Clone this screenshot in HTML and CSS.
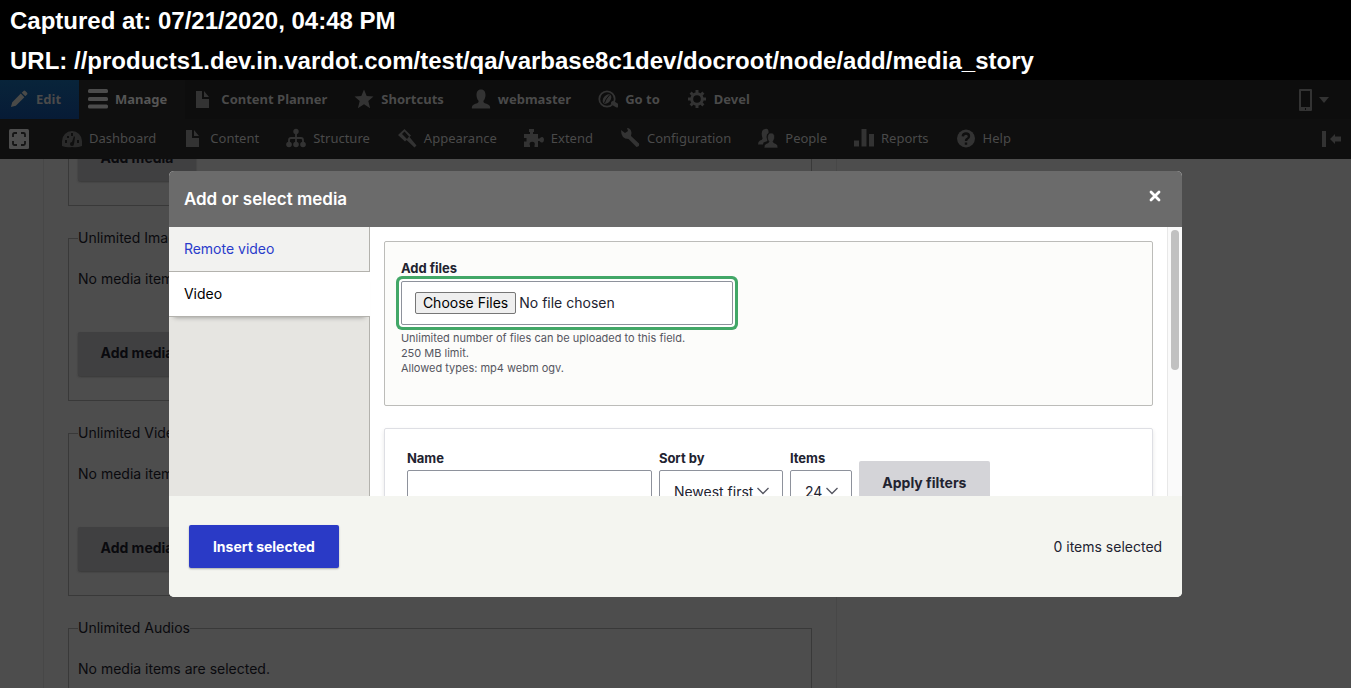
FILE: index.html
```html
<!DOCTYPE html>
<html lang="en">
<head>
<meta charset="utf-8">
<title>Create Media Story</title>
<link rel="stylesheet" href="styles.css">
</head>
<body>
<header class="capture">
  <p>Captured at: 07/21/2020, 04:48 PM</p>
  <p>URL: //products1.dev.in.vardot.com/test/qa/varbase8c1dev/docroot/node/add/media_story</p>
</header>
<div class="app">
  <nav class="toolbar" aria-label="Administration">
    <div class="bar bar-main">
      <a class="item edit" href="#"><svg viewBox="0 0 20 20"><path d="M1 19l1.500-5.500L12 4l4 4-9.500 9.500zM13 3l2-2q1-.8 2 0l2 2q.8 1 0 2l-2 2z"/></svg>Edit</a>
      <a class="item active" href="#"><svg viewBox="0 0 20 20"><rect y="0" width="20" height="4" rx="1.500"/><rect y="8" width="20" height="4" rx="1.500"/><rect y="15.500" width="20" height="4" rx="1.500"/></svg>Manage</a>
      <a class="item" href="#"><svg viewBox="0 0 20 20"><path d="M2 2h6v8h7v9H2zM10 2l5 6h-5z"/></svg>Content Planner</a>
      <a class="item" href="#"><svg viewBox="0 0 20 20"><path d="M10 .5l2.700 6.500 6.800.4-5.200 4.600 1.800 7.200-6.100-4-6.100 4L5.700 12 .5 7.400 7.300 7z"/></svg>Shortcuts</a>
      <a class="item" href="#"><svg viewBox="0 0 20 20"><path d="M10 .5c3.500 0 4.500 2.500 4.500 5.500 0 2.500-.8 4.500-2 5.700-.6 2.600 2.500 2.500 5 4 1.500 1 1.700 2 1.700 3.800H.8c0-1.800.2-2.800 1.700-3.800 2.500-1.500 5.600-1.400 5-4-1.200-1.200-2-3.200-2-5.700C5.500 3 6.500.5 10 .5z"/></svg>webmaster</a>
      <a class="item" href="#"><svg viewBox="0 0 20 20"><circle cx="9" cy="10" r="7.700" fill="none" stroke="currentColor" stroke-width="1.800"/><ellipse cx="9" cy="10" rx="3.500" ry="5.500" transform="rotate(38 9 10)"/><path d="M6.500 14q1-4 5-8" stroke="#0d0d0d" fill="none"/><path d="M15 14l4 2.500" stroke="currentColor" stroke-width="4" stroke-linecap="round"/></svg>Go to</a>
      <a class="item" href="#"><svg viewBox="0 0 20 20"><circle cx="10" cy="10" r="5.300" fill="none" stroke="currentColor" stroke-width="3"/><path d="M10 1v3M10 16v3M1 10h3M16 10h3M3.600 3.600l2.200 2.200M14.200 14.200l2.200 2.200M3.600 16.400l2.200-2.200M14.200 5.800l2.200-2.200" stroke="currentColor" stroke-width="3"/></svg>Devel</a>
      <button class="device" type="button" aria-label="Preview on device"><svg viewBox="0 0 30 22"><path fill-rule="evenodd" d="M1 0h11q1 0 1 1v20q0 1-1 1H1q-1 0-1-1V1q0-1 1-1zm1 2v16h9V2zM6 19v2h1v-2z"/><path d="M20 8h10l-5 6z"/></svg></button>
    </div>
    <div class="bar bar-tray">
      <a class="home" href="#" aria-label="Home"><svg viewBox="0 0 20 20"><rect width="20" height="20" rx="1.500"/><g fill="none" stroke="#151515" stroke-width="1.800"><path d="M4 8V5.500Q4 4 5.500 4H8M12 4h2.500Q16 4 16 5.500V8M16 12v2.500q0 1.500-1.500 1.500H12M8 16H5.500Q4 16 4 14.500V12"/></g></svg></a>
      <a class="item" href="#"><svg class="dim" viewBox="0 0 20 20"><path fill-rule="evenodd" d="M0 18v-5a10 10 0 0120 0v5q-5 2-10 1-5 1-10-1zm3-6v3h2v-3zm2-4v2h2V8zm4-3v3h2V5zm3 3l-2 6q-2 0-2 2t2 2 2-2l1-7zm3 4v3h2v-3z"/></svg>Dashboard</a>
      <a class="item" href="#"><svg viewBox="0 0 20 20"><path d="M3 2h6v8h7v9H3zM11 2l5 6h-5z"/></svg>Content</a>
      <a class="item" href="#"><svg viewBox="0 0 20 20"><circle cx="10" cy="3.500" r="2.700"/><circle cx="3" cy="16.500" r="2.800"/><circle cx="10" cy="16.500" r="2.800"/><circle cx="17" cy="16.500" r="2.800"/><path d="M10 4v12M3 16v-4q0-2 2-2h10q2 0 2 2v4" fill="none" stroke="currentColor" stroke-width="1.800"/></svg>Structure</a>
      <a class="item" href="#"><svg viewBox="0 0 20 20"><path fill-rule="evenodd" d="M7.500 1l6.500 6.500-1.500 1.500 7 8.500-2 2L9.500 12 8 13.500l-7-6.500zm0 2.500L5 6l5 5 2-2.500z"/></svg>Appearance</a>
      <a class="item" href="#"><svg viewBox="0 0 20 20"><path d="M0 6h6V4H5V1h5v3H9v2h5v4.500h1.500Q17 8.500 18.500 9q1.500.5 1.500 2.700T18.500 14.500q-1.500.5-3-1.500H14v6h-3.500v-1.500q1-2.500-1-3.500-2-.8-3.500.5-1 1.500 0 3V19H0v-5.500h2.500V10H0z"/></svg>Extend</a>
      <a class="item" href="#"><svg viewBox="0 0 20 20"><path d="M1 2l4 3 3-2-1-3q4 0 4.500 5l-.5 3 8 7.500q1 3-2.500 3.500L8.500 11Q1 11 1 2z"/></svg>Configuration</a>
      <a class="item" href="#"><svg viewBox="0 0 20 20"><path d="M7 1q4-1 3.500 4-2 1-2 4l1 4-4 1.500-.5 2H0q0-3 2-4 3-.5 2.500-2.500Q2 2 7 1z"/><path d="M13 5q4 0 3.500 5-.5 2-1.500 3.500 0 1.500 3 2.200 2 1 2 4.300H6q0-3.300 2-4.300 3-.7 3-2.200Q9.500 12 9.500 10 9.500 5 13 5z" stroke="#0f0f0f" stroke-width=".6"/></svg>People</a>
      <a class="item" href="#"><svg viewBox="0 0 20 20"><path d="M0 12.500h5v6H0zM7.500 1h5v17.500h-5zM15 6h5v12.500h-5z"/></svg>Reports</a>
      <a class="item" href="#"><svg viewBox="0 0 20 20"><circle cx="10" cy="10.500" r="9"/><path d="M6.800 8.300Q7 5.500 10 5.500t3 2.700Q13 10 11 11q-1 .7-1 2M10 14.500v2.200" fill="none" stroke="#0f0f0f" stroke-width="2.400"/></svg>Help</a>
      <button class="collapse" type="button" aria-label="Vertical orientation"><svg viewBox="0 0 20 16"><path d="M0 0h4v16H0zM8 8l5-5v2.500h6v5h-6V13z"/></svg></button>
    </div>
  </nav>
  <main class="page">
    <form class="sheet">
      <fieldset class="scrolled"><button class="add" type="button">Add media</button></fieldset>
      <fieldset><legend>Unlimited Images</legend><p>No media items are selected.</p><button class="add" type="button">Add media</button></fieldset>
      <fieldset><legend>Unlimited Videos</legend><p>No media items are selected.</p><button class="add" type="button">Add media</button></fieldset>
      <fieldset><legend>Unlimited Audios</legend><p>No media items are selected.</p><button class="add" type="button" aria-label="Add media"></button></fieldset>
    </form>
  </main>
  <div class="overlay">
    <section class="modal" role="dialog" aria-labelledby="modal-title">
      <header class="modal-head">
        <h1 id="modal-title">Add or select media</h1>
        <button class="close" type="button" aria-label="Close"><svg viewBox="0 0 12 12"><path d="M2 2l8 8M10 2l-8 8" stroke="currentColor" stroke-width="2.800" stroke-linecap="round"/></svg></button>
      </header>
      <div class="modal-body">
        <nav class="tabs" aria-label="Media type">
          <a href="#">Remote video</a>
          <a href="#" class="current">Video</a>
        </nav>
        <div class="content">
          <div class="upload">
            <label for="files">Add files</label>
            <input id="files" class="file" type="file" multiple>
            <p class="help">Unlimited number of files can be uploaded to this field.<br>250 MB limit.<br>Allowed types: mp4 webm ogv.</p>
          </div>
          <form class="filters">
            <div class="field name"><label for="name">Name</label><input id="name" type="text"></div>
            <div class="field sort"><label for="sort">Sort by</label><select id="sort"><option>Newest first</option></select></div>
            <div class="field count"><label for="count">Items</label><select id="count"><option>24</option></select></div>
            <button class="apply" type="button">Apply filters</button>
          </form>
        </div>
        <div class="scroll"><div class="thumb"></div></div>
      </div>
      <footer class="modal-foot">
        <button class="insert" type="button">Insert selected</button>
        <span class="tally">0 items selected</span>
      </footer>
    </section>
  </div>
</div>
</body>
</html>
```
FILE: styles.css
```css
* { box-sizing: border-box; }
body {
  margin: 0;
  height: 100vh;
  display: flex;
  flex-direction: column;
  overflow: hidden;
  background: #4d4d4d;
  color: #222330;
  font: 14px/20px Inter, "Liberation Sans", sans-serif;
}
p, h1 { margin: 0; }
button, input, select { font: inherit; color: inherit; margin: 0; }
a { text-decoration: none; }
svg { display: block; fill: currentColor; }

.capture {
  height: 80px;
  background: #000;
  color: #fff;
  padding: 1px 10px 0;
  font: bold 24px/40px "Liberation Sans", Arial, sans-serif;
}
.capture p:last-child { line-height: 39px; }
.app {
  flex: 1;
  min-height: 0;
  position: relative;
  display: flex;
  flex-direction: column;
}

.toolbar {
  position: relative;
  z-index: 1;
  font: 13px/20px "Noto Sans", "Open Sans", sans-serif;
}
.bar { display: flex; align-items: stretch; }
.bar-main { height: 39px; background: #0d0d0d; font-weight: bold; }
.bar-tray { height: 40px; background: #0f0f0f; }
.item {
  display: flex;
  align-items: center;
  gap: 7px;
  padding: 0 18px 2px 9px;
  color: #4a4a4a;
}
.item svg { width: 20px; height: 20px; color: #333; }
.item .dim { color: #2a2a2a; }
.edit { background: linear-gradient(#08243a, #071b36); }
.edit svg { width: 18px; height: 18px; color: #4a4a48; margin-left: 1px; margin-right: 1px; }
.active { background: #0f0f0f; color: #555; }
.active svg { color: #4c4c4c; }
.device, .collapse, .close { border: 0; background: none; padding: 0; }
.device { margin-left: auto; padding-right: 22px; color: #333; }
.device svg { width: 30px; height: 22px; }
.home { display: flex; align-items: center; padding: 0 24px 0 9px; color: #4d4d4d; }
.home svg { width: 20px; height: 20px; }
.collapse { margin-left: auto; padding-right: 9px; color: #333; }
.collapse svg { width: 20px; height: 16px; }

.page { flex: 1; min-height: 0; overflow: hidden; display: flex; padding-left: 43px; }
.sheet {
  width: 794px;
  padding: 0 24px;
  border: solid #474747;
  border-width: 0 1px;
  margin-top: -22px;
  flex-shrink: 0;
  align-self: flex-start;
  color: #0a0a0e;
}
.sheet fieldset {
  margin: 0 0 22px;
  padding: 0 9px 24px;
  border: 1px solid #393939;
}
.sheet .scrolled { border-top: 0; }
.sheet .scrolled .add { margin-top: 0; }
.sheet legend { padding: 0; }
.sheet p { margin-top: 21px; }
.add {
  display: block;
  height: 44px;
  width: 118px;
  margin-top: 43px;
  padding: 0 0 2px;
  border: 0;
  border-radius: 2px;
  background: #404041;
  box-shadow: 0 1px 2px #383838;
  font-weight: bold;
}

.overlay {
  position: absolute;
  inset: 0;
  z-index: 2;
  display: flex;
  align-items: center;
  justify-content: center;
}
.modal {
  width: 75%;
  height: 70%;
  display: flex;
  flex-direction: column;
  border-radius: 5px;
  overflow: hidden;
  background: #fff;
}
.modal-head {
  display: flex;
  align-items: center;
  justify-content: space-between;
  height: 56px;
  padding: 0 21px 0 15px;
  background: #6b6b6b;
  color: #fff;
}
.modal-head h1 { font-size: 17px; font-weight: 600; line-height: 24px; }
.close { padding-bottom: 6px; }
.close svg { width: 12px; height: 12px; }
.modal-body { flex: 1; min-height: 0; display: flex; overflow: hidden; }
.tabs { width: 201px; flex-shrink: 0; background: #e6e5e1; border-right: 1px solid #b3b2ad; }
.tabs a {
  display: block;
  height: 45px;
  padding: 12px 15px;
  border-bottom: 1px solid #b3b2ad;
  background: #f2f2f0;
  color: #2a3ccb;
}
.tabs .current {
  margin-right: -1px;
  background: #fff;
  color: #000;
  box-shadow: 0 5px 5px -5px rgba(0, 0, 0, .4);
}
.content { flex: 1; min-width: 0; padding: 14px; overflow: hidden; }
.content label { display: block; font-size: 13px; font-weight: 700; line-height: 20px; }
.upload {
  height: 165px;
  padding: 16px;
  border: 1px solid #bcbcb9;
  border-radius: 2px;
  background: #fcfcfa;
}
.file {
  display: block;
  width: 332px;
  height: 44px;
  margin-top: 3px;
  padding: 10px 13px;
  border: 1px solid #8e929c;
  border-radius: 2px;
  background: #fff;
  box-shadow: 0 0 0 2px #fff, 0 0 0 5px #42a767;
}
.file::file-selector-button {
  height: 22px;
  margin-right: 3px;
  padding: 0 7px;
  border: 1px solid #767676;
  border-radius: 2px;
  background: #efefef;
  color: #000;
  font: inherit;
}
.help { margin-top: 6px; font-size: 11px; line-height: 15px; color: #55565f; }
.filters {
  display: flex;
  align-items: flex-start;
  gap: 7px;
  height: 120px;
  margin-top: 22px;
  padding: 19px 22px;
  border: 1px solid #dedfe4;
  border-radius: 2px;
  box-shadow: 0 2px 4px rgba(0, 0, 0, .1);
}
.field input, .field select {
  display: block;
  width: 100%;
  height: 44px;
  margin-top: 2px;
  padding: 0 14px;
  border: 1px solid #8e929c;
  border-radius: 2px;
  background-color: #fff;
}
.field select {
  appearance: none;
  padding-right: 0;
  background-image: url("data:image/svg+xml,%3Csvg xmlns='http://www.w3.org/2000/svg' width='14' height='8'%3E%3Cpath d='M1.500 1l5.500 5.500L12.500 1' fill='none' stroke='%23545560' stroke-width='1.300'/%3E%3C/svg%3E");
  background-repeat: no-repeat;
  background-position: right 12px top 16px;
}
.name { width: 245px; }
.sort { width: 124px; }
.count { width: 62px; }
.apply {
  width: 131px;
  height: 44px;
  margin-top: 13px;
  border: 0;
  border-radius: 2px;
  background: #d4d4d8;
  font-weight: 700;
}
.scroll { width: 15px; padding: 3px; border-left: 1px solid #e8e8e8; background: #fafafa; }
.thumb { width: 8px; height: 140px; border-radius: 4px; background: #c1c1c1; }
.modal-foot {
  display: flex;
  align-items: center;
  justify-content: space-between;
  height: 101px;
  padding: 0 20px;
  background: #f4f5f0;
}
.insert {
  width: 150px;
  height: 43px;
  padding: 2px 0 0;
  border: 0;
  border-radius: 2px;
  background: #2a3ac6;
  box-shadow: 0 1px 2px rgba(0, 0, 0, .3);
  color: #fff;
  font-weight: 700;
}
.tally { padding-top: 2px; }
```
